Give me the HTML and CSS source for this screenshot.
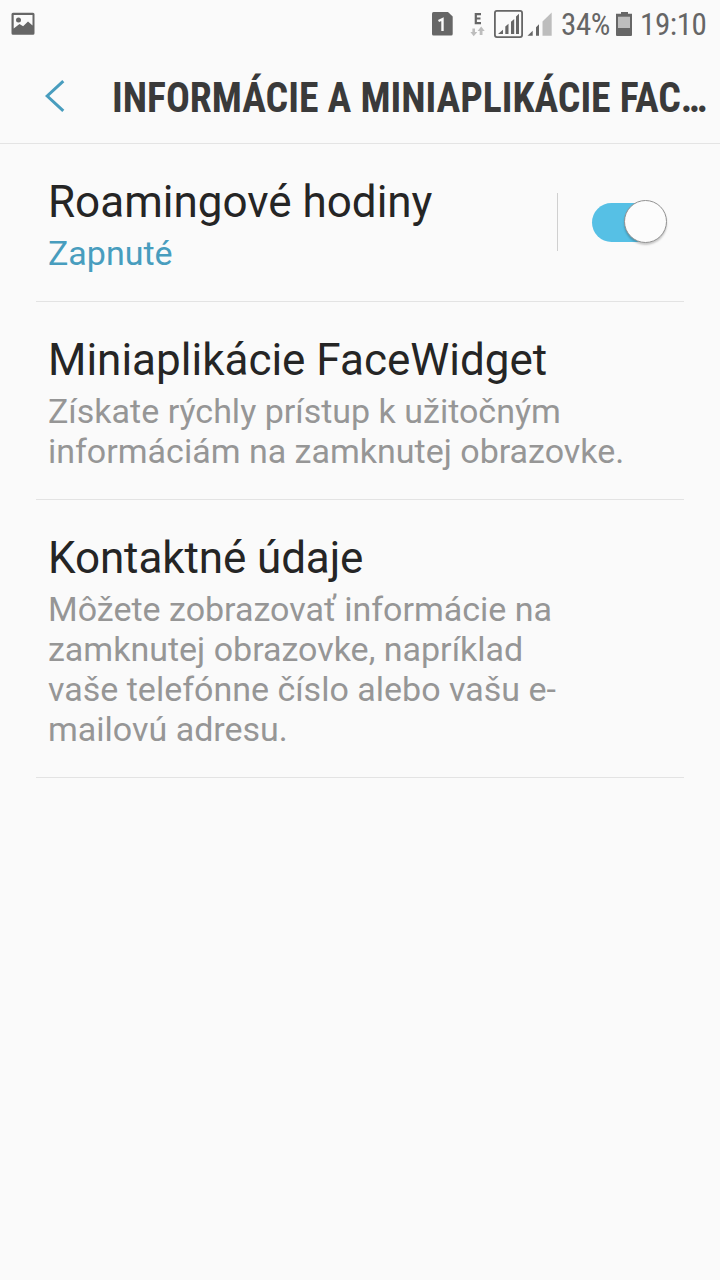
FILE: index.html
```html
<!DOCTYPE html>
<html lang="sk">
<head>
<meta charset="utf-8">
<title>Informácie a miniaplikácie FaceWidget</title>
<link rel="stylesheet" href="styles.css">
</head>
<body>
<div class="status">
  <svg class="picture" width="24" height="24" viewBox="0 0 24 24"><path fill="#666" fill-rule="evenodd" d="M2 .7h20a1.500 1.500 0 0 1 1.500 1.500v19.100a1.500 1.500 0 0 1-1.500 1.500H2A1.500 1.500 0 0 1 .5 21.300V2.200A1.500 1.500 0 0 1 2 .7zM2.700 3v13.500l5.800-4.500 3.600 2.300L17 9.500l4.500 4V3z"/><circle cx="7.500" cy="8" r="2.500" fill="#666"/></svg>
  <svg class="indicators" width="124" height="32" viewBox="430 8 124 32">
    <path fill="#666" d="M433.500 12h14.500l4.700 4.500V34a1.500 1.500 0 0 1-1.500 1.500h-17.700A1.500 1.500 0 0 1 432 34V13.500a1.500 1.500 0 0 1 1.500-1.500z"/>
    <path fill="none" stroke="#fafafa" stroke-width="2.400" d="M438.500 21l4-1.900V31"/>
    <path fill="none" stroke="#666" stroke-width="2.200" d="M481 14.100h-5.200v9H481M475.800 18.500h4.700"/>
    <path fill="#bdbdbd" d="M472.400 28.500h2.600V32h2.300l-3.600 4.200L470.400 32h2zM479.700 35v-4h-2.100l3.600-4.400 3.500 4.400h-2.200v4z"/>
    <rect x="494.900" y="10.900" width="27.200" height="26.200" rx="2" fill="none" stroke="#666" stroke-width="1.800"/>
    <path fill="#666" d="M498 34l5-4.300V34zM505.300 34v-7.400l3.200-2.800V34zM511 34V21.800l3.200-2.800v15zM516 34V16.500l3-2.700V34zM527.500 35.800l5.200-5v5zM536 35.800v-8.500l3-3v11.500z"/>
    <path fill="#bdbdbd" d="M542.500 35.800V21.500l9.200-9v23.300z"/>
  </svg>
  <span class="percent">34%</span>
  <svg class="battery" width="16" height="24" viewBox="0 0 16 24"><path fill="#666" d="M5 0h7v1.700h4V23a1 1 0 0 1-1 1H1a1 1 0 0 1-1-1V1.700h5z"/><path fill="#bdbdbd" d="M2 4.700h12V16H2z"/></svg>
  <span class="time">19:10</span>
</div>
<header class="header">
  <svg width="20" height="32" viewBox="0 0 20 32"><path fill="none" stroke="#489dbe" stroke-width="3" d="M18.300 1.100L2.200 16l16.100 14.900"/></svg>
  <h1 class="heading">INFORMÁCIE A MINIAPLIKÁCIE FAC…</h1>
</header>
<main class="list">
  <section class="row split">
    <div class="copy">
      <h2 class="name">Roamingové hodiny</h2>
      <p class="detail on">Zapnuté</p>
    </div>
    <div class="control"><div class="track"><div class="thumb"></div></div></div>
  </section>
  <section class="row">
    <h2 class="name">Miniaplikácie FaceWidget</h2>
    <p class="detail">Získate rýchly prístup k užitočným<br>informáciám na zamknutej obrazovke.</p>
  </section>
  <section class="row">
    <h2 class="name contact">Kontaktné údaje</h2>
    <p class="detail">Môžete zobrazovať informácie na<br>zamknutej obrazovke, napríklad<br>vaše telefónne číslo alebo vašu e-<br>mailovú adresu.</p>
  </section>
</main>
</body>
</html>
```
FILE: styles.css
```css
* { box-sizing: border-box; margin: 0; }
body {
  height: 1280px;
  overflow: hidden;
  background: #fafafa;
  font-family: Roboto, "Noto Sans", sans-serif;
}
svg { display: block; flex: none; }
.status { display: flex; height: 48px; align-items: center; padding-left: 11px; }
.indicators { margin-left: 395px; }
.percent, .time {
  padding-top: 2px;
  font-family: "Roboto Condensed", Roboto, sans-serif;
  font-size: 31px;
  line-height: 36px;
  letter-spacing: -0.4px;
  color: #666;
  white-space: nowrap;
}
.percent { width: 55px; margin-left: 7px; }
.time { margin-left: 8px; }
.header {
  display: flex;
  height: 96px;
  align-items: center;
  padding-left: 45px;
  border-bottom: 1px solid #e4e4e4;
}
.heading {
  margin-left: 47px;
  padding-top: 4px;
  font: 700 42px/50px "Roboto Condensed", Roboto, sans-serif;
  color: #3a3a3a;
  white-space: nowrap;
  transform: scaleX(0.945);
  transform-origin: left center;
}
.list { padding: 0 36px; }
.row { padding: 32px 12px 28px; border-bottom: 1px solid #e3e3e3; }
.split { display: flex; justify-content: space-between; align-items: center; }
.name { font-size: 44px; line-height: 52px; font-weight: 400; color: #252525; white-space: nowrap; }
.contact { letter-spacing: -0.1px; }
.detail { margin-top: 5px; font-size: 34px; line-height: 40px; color: #969696; white-space: nowrap; }
.on { color: #489dbe; }
.control {
  display: flex;
  width: 115px;
  height: 58px;
  align-items: center;
  padding-left: 34px;
  border-left: 1px solid #d0d0d0;
  margin: -5px 0 0;
}
.track { display: flex; justify-content: flex-end; align-items: center; width: 75px; height: 39px; border-radius: 20px; background: linear-gradient(90deg, #56c0e5 55px, transparent 55px); }
.thumb { width: 43px; height: 43px; margin-top: -1px; border: 1px solid #929292; border-radius: 50%; background: #fcfcfc; box-shadow: 0 2px 2px #0003; }
```
